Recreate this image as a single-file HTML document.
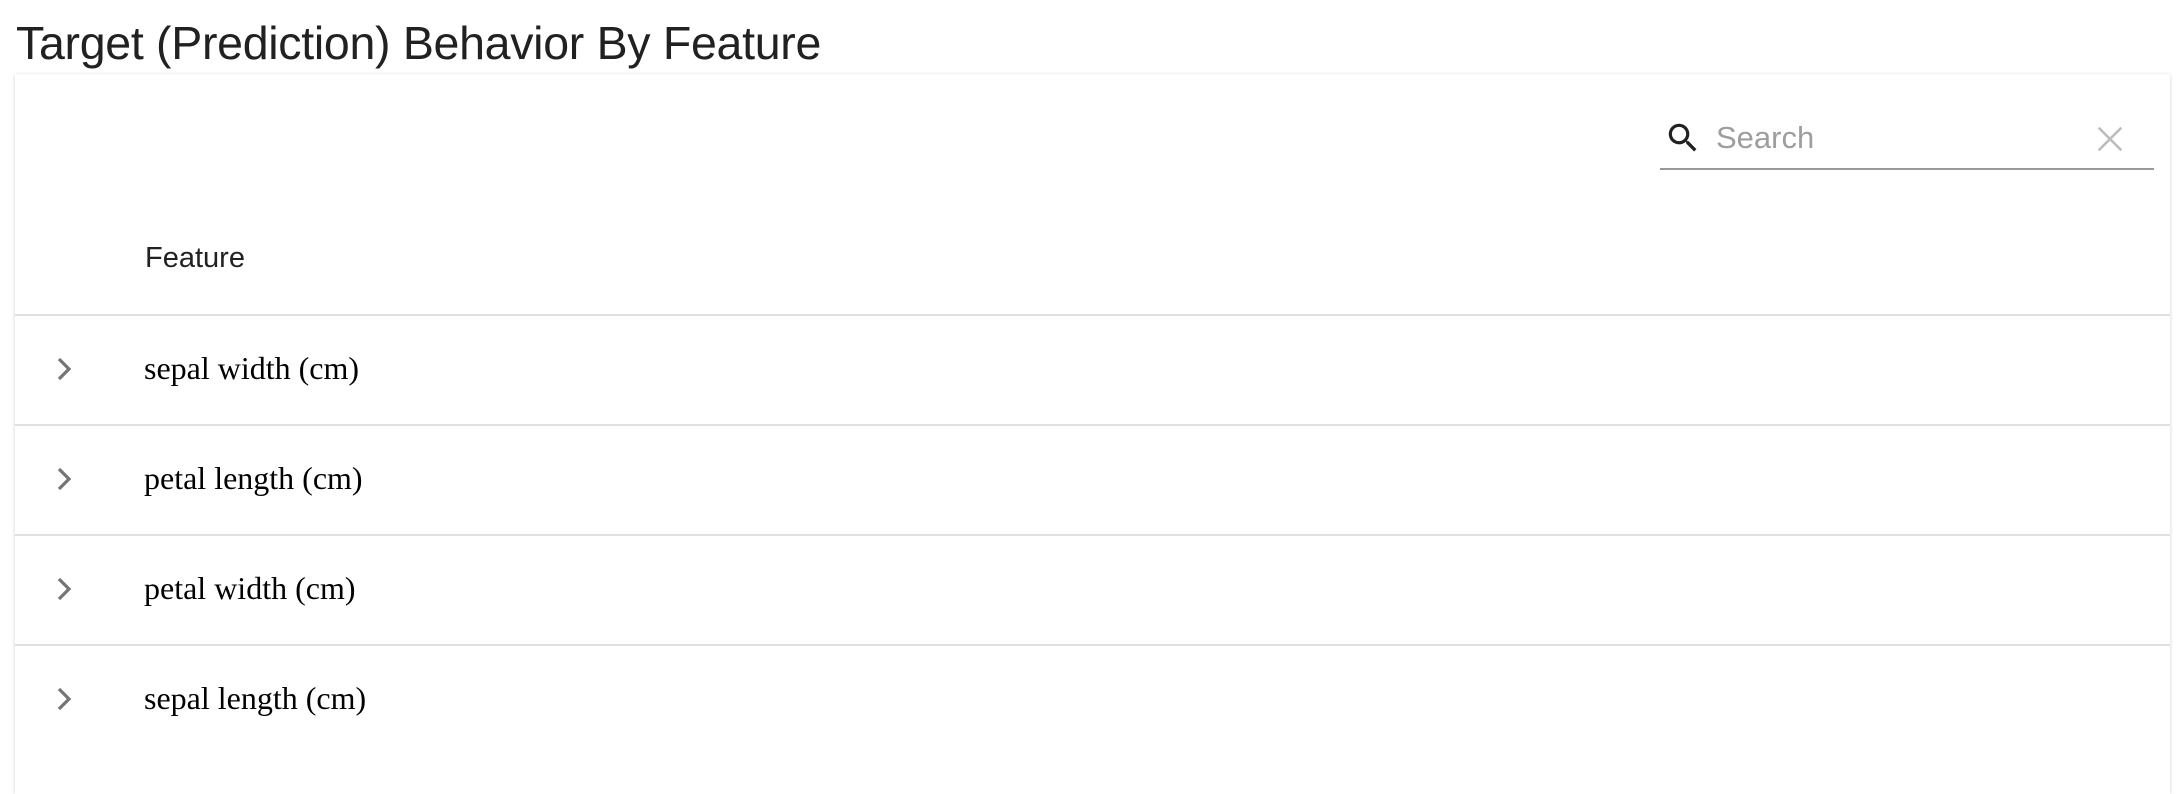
<!DOCTYPE html>
<html><head><meta charset="utf-8"><style>
html,body{margin:0;padding:0;background:#fff;width:2182px;height:752px;overflow:hidden}
h1{position:absolute;left:16px;top:20px;margin:0;font:400 46.5px/1 "Liberation Sans",sans-serif;color:#212121;letter-spacing:-0.3px;white-space:nowrap}
.card{position:absolute;left:15px;top:74px;width:2155px;height:720px;background:#fff;box-shadow:0 1px 4px rgba(0,0,0,.18)}
.search{position:absolute;left:1645px;top:19px;width:494px;height:75px;border-bottom:2px solid #999}
.search .t{position:absolute;left:56px;top:27px;font:400 31px "Liberation Sans",sans-serif;color:#9e9e9e}
.hdr{position:absolute;left:130px;top:168px;font:500 29px "Liberation Sans",sans-serif;color:#212121}
.line{position:absolute;left:0;width:2155px;height:2px;background:#e0e0e0}
.row{position:absolute;left:129px;font:400 32px "Liberation Serif",serif;color:#000}
.chev{position:absolute;left:34px}
</style></head><body>
<h1>Target (Prediction) Behavior By Feature</h1>
<div class="card">
 <div class="search">
  <svg style="position:absolute;left:4px;top:26px" width="38" height="38" viewBox="0 0 24 24"><path d="M15.5 14h-.79l-.28-.27A6.47 6.47 0 0 0 16 9.5 6.5 6.5 0 1 0 9.5 16c1.61 0 3.09-.59 4.23-1.57l.27.28v.79l5 4.99L20.49 19l-4.99-5zm-6 0C7.01 14 5 11.99 5 9.5S7.01 5 9.5 5 14 7.01 14 9.5 11.99 14 9.5 14z" fill="#212121"/></svg>
  <div class="t">Search</div>
  <svg style="position:absolute;left:433px;top:29px" width="34" height="34" viewBox="0 0 24 24"><path d="M4 4L20 20M20 4L4 20" stroke="#bdbdbd" stroke-width="1.8"/></svg>
 </div>
 <div class="hdr">Feature</div>
 <div class="line" style="top:240px"></div>
 <div class="line" style="top:350px"></div>
 <div class="line" style="top:460px"></div>
 <div class="line" style="top:570px"></div>
 <svg class="chev" style="top:280px" width="30" height="30" viewBox="0 0 24 24"><path d="M8 4l8 8-8 8" stroke="#757575" stroke-width="2.6" fill="none"/></svg>
 <svg class="chev" style="top:390px" width="30" height="30" viewBox="0 0 24 24"><path d="M8 4l8 8-8 8" stroke="#757575" stroke-width="2.6" fill="none"/></svg>
 <svg class="chev" style="top:500px" width="30" height="30" viewBox="0 0 24 24"><path d="M8 4l8 8-8 8" stroke="#757575" stroke-width="2.6" fill="none"/></svg>
 <svg class="chev" style="top:610px" width="30" height="30" viewBox="0 0 24 24"><path d="M8 4l8 8-8 8" stroke="#757575" stroke-width="2.6" fill="none"/></svg>
 <div class="row" style="top:276px">sepal width (cm)</div>
 <div class="row" style="top:386px">petal length (cm)</div>
 <div class="row" style="top:496px">petal width (cm)</div>
 <div class="row" style="top:606px">sepal length (cm)</div>
</div>
</body></html>
